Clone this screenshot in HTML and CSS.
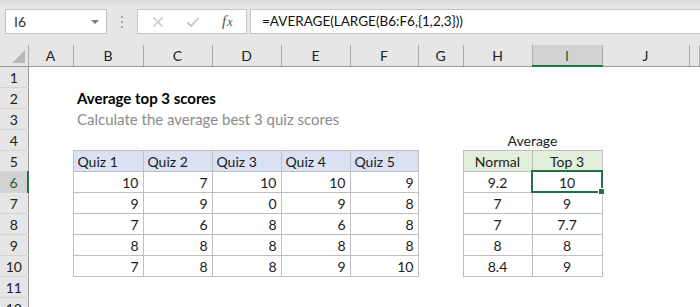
FILE: index.html
```html
<!DOCTYPE html>
<html lang="en">
<head>
    <meta charset="UTF-8">
    <meta name="viewport" content="width=device-width, initial-scale=1.0">
    <title>Average top 3 scores</title>
    <link rel="stylesheet" href="styles.css">
</head>
<body>
    <div class="toolbar">
        <div class="namebox">
            <span>I6</span>
            <span class="caret"></span>
        </div>
        <div class="grip"><i></i><i></i><i></i></div>
        <div class="fxbtns">
            <svg class="btn-x" width="12" height="12" viewBox="0 0 12 12"><path d="M1.5 1.5 L10.5 10.5 M10.5 1.5 L1.5 10.5" stroke="#c4c4c4" stroke-width="1.4" fill="none"/></svg>
            <svg class="btn-ok" width="14" height="12" viewBox="0 0 14 12"><path d="M1.5 6.5 L5 10 L12.5 2" stroke="#c4c4c4" stroke-width="1.8" fill="none"/></svg>
            <span class="fx"><i>f</i><i class="sub">x</i></span>
        </div>
        <div class="formula">=AVERAGE(LARGE(B6:F6,{1,2,3}))</div>
    </div>

    <table class="sheet">
        <colgroup>
            <col style="width:28px"><col style="width:45px"><col style="width:70px"><col style="width:69px">
            <col style="width:69px"><col style="width:69px"><col style="width:68px"><col style="width:45px">
            <col style="width:69px"><col style="width:70px"><col style="width:87px"><col>
        </colgroup>
        <tr class="head">
            <th class="corner"><span class="tri"></span></th>
            <th>A</th><th>B</th><th>C</th><th>D</th><th>E</th><th>F</th><th>G</th><th>H</th><th class="sel">I</th><th>J</th><th></th>
        </tr>
        <tr><th class="rh">1</th><td></td><td></td><td></td><td></td><td></td><td></td><td></td><td></td><td></td><td></td><td></td></tr>
        <tr><th class="rh">2</th><td></td><td class="title">Average top 3 scores</td><td></td><td></td><td></td><td></td><td></td><td></td><td></td><td></td><td></td></tr>
        <tr><th class="rh">3</th><td></td><td class="subtitle">Calculate the average best 3 quiz scores</td><td></td><td></td><td></td><td></td><td></td><td></td><td></td><td></td><td></td></tr>
        <tr><th class="rh">4</th><td></td><td></td><td></td><td></td><td></td><td></td><td></td><td class="c" colspan="2">Average</td><td></td><td></td></tr>
        <tr>
            <th class="rh">5</th><td></td>
            <td class="qh">Quiz 1</td><td class="qh">Quiz 2</td><td class="qh">Quiz 3</td><td class="qh">Quiz 4</td><td class="qh">Quiz 5</td>
            <td></td><td class="ah">Normal</td><td class="ah">Top 3</td><td></td><td></td>
        </tr>
        <tr>
            <th class="rh sel">6</th><td></td>
            <td class="n">10</td><td class="n">7</td><td class="n">10</td><td class="n">10</td><td class="n">9</td>
            <td></td><td class="a">9.2</td><td class="a active">10</td><td></td><td></td>
        </tr>
        <tr>
            <th class="rh">7</th><td></td>
            <td class="n">9</td><td class="n">9</td><td class="n">0</td><td class="n">9</td><td class="n">8</td>
            <td></td><td class="a">7</td><td class="a">9</td><td></td><td></td>
        </tr>
        <tr>
            <th class="rh">8</th><td></td>
            <td class="n">7</td><td class="n">6</td><td class="n">8</td><td class="n">6</td><td class="n">8</td>
            <td></td><td class="a">7</td><td class="a">7.7</td><td></td><td></td>
        </tr>
        <tr>
            <th class="rh">9</th><td></td>
            <td class="n">8</td><td class="n">8</td><td class="n">8</td><td class="n">8</td><td class="n">8</td>
            <td></td><td class="a">8</td><td class="a">8</td><td></td><td></td>
        </tr>
        <tr>
            <th class="rh">10</th><td></td>
            <td class="n">7</td><td class="n">8</td><td class="n">8</td><td class="n">9</td><td class="n">10</td>
            <td></td><td class="a">8.4</td><td class="a">9</td><td></td><td></td>
        </tr>
        <tr><th class="rh">11</th><td></td><td></td><td></td><td></td><td></td><td></td><td></td><td></td><td></td><td></td><td></td></tr>
        <tr><th class="rh">12</th><td></td><td></td><td></td><td></td><td></td><td></td><td></td><td></td><td></td><td></td><td></td></tr>
    </table>
</body>
</html>
```

FILE: styles.css
```css
body { margin: 0; width: 700px; height: 307px; overflow: hidden; background: #fff; font-family: Lato, "Open Sans", sans-serif; color: #1b1b1b; }

/* formula bar */
.toolbar { display: flex; align-items: flex-start; height: 45px; box-sizing: border-box; padding: 9px 0 0 5px; background: linear-gradient(#d9d9d9, #e6e6e6 7px); }
.namebox { display: flex; align-items: center; justify-content: space-between; width: 102px; height: 25px; box-sizing: border-box; padding: 0 7px 0 8px; background: #fff; border: 1px solid #c6c6c6; font-size: 14px; color: #333; }
.caret { width: 0; height: 0; border-left: 4px solid transparent; border-right: 4px solid transparent; border-top: 4px solid #7a7a7a; }
.grip { width: 30px; height: 25px; display: flex; flex-direction: column; align-items: center; justify-content: center; gap: 3px; }
.grip i { width: 2px; height: 2px; background: #a8a8a8; }
.fxbtns { display: flex; align-items: center; width: 110px; height: 25px; box-sizing: border-box; background: #fff; border: 1px solid #c6c6c6; }
.btn-x { margin-left: 14px; }
.btn-ok { margin-left: 22px; }
.fx { margin-left: 22px; font-family: "Liberation Serif", serif; font-size: 15px; color: #555; }
.fx .sub { font-size: 12px; margin-left: 1px; }
.formula { flex: 1; margin-left: 3px; margin-right: -2px; height: 25px; box-sizing: border-box; padding-left: 11px; line-height: 23px; background: #fff; border: 1px solid #c6c6c6; font-size: 13.5px; color: #111; }

/* grid */
.sheet { border-collapse: collapse; table-layout: fixed; width: 700px; font-size: 14px; }
.sheet tr { height: 21px; }
.sheet th, .sheet td { padding: 0 4px; line-height: 19px; vertical-align: bottom; white-space: nowrap; overflow: visible; }
.head th { height: 20px; padding: 0; background: #e6e6e6; border-right: 1px solid #ababab; border-bottom: 1px solid #9b9b9b; font-weight: normal; text-align: center; vertical-align: middle; color: #222; }
.head th.sel { background: #d2d2d2; border-bottom: 2px solid #217346; color: #1e5c38; }
.corner { position: relative; }
.tri { position: absolute; right: 3px; bottom: 3px; width: 0; height: 0; border-left: 13px solid transparent; border-bottom: 13px solid #b7b7b7; }
.rh { padding: 0; background: #e6e6e6; border-right: 1px solid #9b9b9b; border-bottom: 1px solid #d4d4d4; font-weight: normal; text-align: center; color: #222; }
.rh.sel { background: #d2d2d2; border-right: 2px solid #217346; color: #1e5c38; }

.title { font-size: 15px; font-weight: bold; color: #000; }
.subtitle { font-size: 15px; color: #8b8b8b; }
.c { text-align: center; }
.qh { background: #d9e1f2; border: 1px solid #bfbfbf; }
.ah { background: #e2efda; border: 1px solid #bfbfbf; text-align: center; }
.n { border: 1px solid #bfbfbf; text-align: right; }
.a { border: 1px solid #bfbfbf; text-align: center; }
.active { position: relative; outline: 2px solid #217346; outline-offset: -1px; }
.active::after { content: ""; position: absolute; right: -3px; bottom: -3px; width: 5px; height: 5px; background: #217346; border: 1px solid #fff; }
```
